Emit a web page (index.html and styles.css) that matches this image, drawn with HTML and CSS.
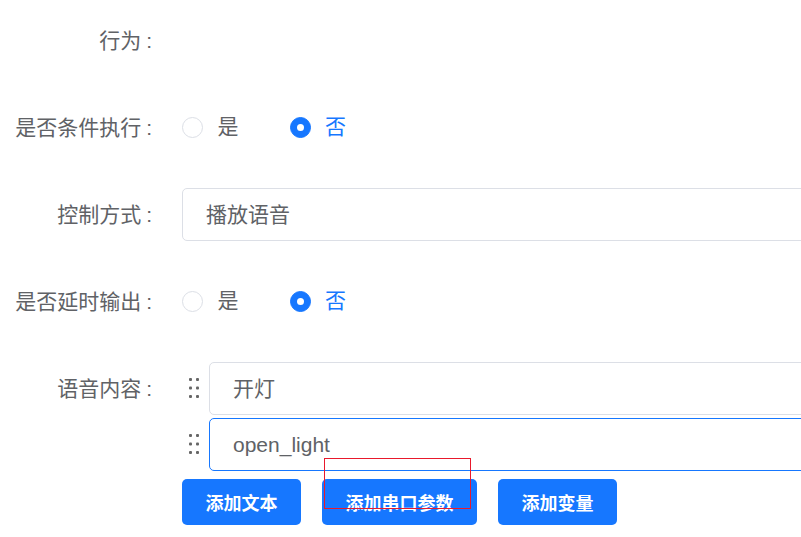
FILE: index.html
```html
<!DOCTYPE html>
<html lang="zh-CN">
<head>
<meta charset="utf-8">
<title>行为配置</title>
<link rel="stylesheet" href="styles.css">
</head>
<body>
<form class="form">
  <div class="item">
    <label class="label">行为</label>
  </div>
  <div class="item">
    <label class="label">是否条件执行</label>
    <div class="control radios">
      <span class="radio"><span class="dot"></span><span class="rtext">是</span></span>
      <span class="radio checked"><span class="dot"></span><span class="rtext">否</span></span>
    </div>
  </div>
  <div class="item">
    <label class="label">控制方式</label>
    <div class="control">
      <div class="input">播放语音</div>
    </div>
  </div>
  <div class="item">
    <label class="label">是否延时输出</label>
    <div class="control radios">
      <span class="radio"><span class="dot"></span><span class="rtext">是</span></span>
      <span class="radio checked"><span class="dot"></span><span class="rtext">否</span></span>
    </div>
  </div>
  <div class="item item-tall">
    <label class="label">语音内容</label>
    <div class="control list">
      <div class="entry">
        <span class="handle"><svg width="12" height="22" viewBox="0 0 12 22"><g fill="#666"><rect x="1" y="1" width="3" height="3" rx="1"/><rect x="8" y="1" width="3" height="3" rx="1"/><rect x="1" y="9.5" width="3" height="3" rx="1"/><rect x="8" y="9.5" width="3" height="3" rx="1"/><rect x="1" y="18" width="3" height="3" rx="1"/><rect x="8" y="18" width="3" height="3" rx="1"/></g></svg></span>
        <div class="input">开灯</div>
      </div>
      <div class="entry">
        <span class="handle"><svg width="12" height="22" viewBox="0 0 12 22"><g fill="#666"><rect x="1" y="1" width="3" height="3" rx="1"/><rect x="8" y="1" width="3" height="3" rx="1"/><rect x="1" y="9.5" width="3" height="3" rx="1"/><rect x="8" y="9.5" width="3" height="3" rx="1"/><rect x="1" y="18" width="3" height="3" rx="1"/><rect x="8" y="18" width="3" height="3" rx="1"/></g></svg></span>
        <div class="input focused">open_light</div>
      </div>
      <div class="buttons">
        <button type="button" class="btn">添加文本</button>
        <button type="button" class="btn">添加串口参数</button>
        <button type="button" class="btn">添加变量</button>
      </div>
    </div>
  </div>
</form>
<div class="marker"></div>
</body>
</html>
```
FILE: styles.css
```css
html, body {
  margin: 0;
  padding: 0;
  background: #fff;
  overflow: hidden;
}
body {
  width: 801px;
  height: 537px;
  position: relative;
  font-family: "Liberation Sans", "Noto Sans CJK SC", sans-serif;
  font-size: 21px;
  color: #606266;
}
.form {
  padding-top: 13.5px;
}
.item {
  display: flex;
  align-items: flex-start;
  margin-bottom: 34px;
  min-height: 53px;
}
.label {
  width: 152px;
  flex: none;
  text-align: right;
  line-height: 53px;
  white-space: nowrap;
}
.label::after {
  content: ":";
  margin-left: 5px;
}
.control {
  margin-left: 30px;
  flex: none;
}
.radios {
  display: flex;
  align-items: center;
  height: 53px;
}
.radio {
  display: inline-flex;
  align-items: center;
  margin-right: 51px;
}
.dot {
  width: 21px;
  height: 21px;
  box-sizing: border-box;
  border: 1px solid #dcdfe6;
  border-radius: 50%;
  margin-right: 14.5px;
  position: relative;
  background: #fff;
}
.checked .dot {
  background: #1677ff;
  border-color: #1677ff;
}
.checked .dot::after {
  content: "";
  position: absolute;
  left: 6px;
  top: 6px;
  width: 7px;
  height: 7px;
  border-radius: 50%;
  background: #fff;
}
.rtext {
  line-height: 24px;
}
.checked .rtext {
  color: #1677ff;
}
.input {
  width: 640px;
  height: 53px;
  box-sizing: border-box;
  border: 1px solid #dcdfe6;
  border-radius: 5px;
  padding-left: 23px;
  line-height: 51px;
  color: #606266;
  background: #fff;
}
.input.focused {
  border-color: #1677ff;
}
.list {
  display: flex;
  flex-direction: column;
  gap: 3px;
}
.entry {
  display: flex;
  align-items: center;
}
.handle {
  width: 24px;
  margin-right: 3px;
  display: flex;
  justify-content: center;
  flex: none;
}
.handle svg {
  display: block;
}
.entry .input {
  width: 613px;
}
.buttons {
  display: flex;
  gap: 21px;
  margin-top: 5px;
}
.btn {
  height: 46.5px;
  padding: 0 23.5px;
  border: none;
  border-radius: 5px;
  background: #1677ff;
  color: #fff;
  font-family: "Noto Sans CJK SC", sans-serif;
  font-size: 18px;
  font-weight: bold;
  cursor: pointer;
}
.marker {
  position: absolute;
  left: 324px;
  top: 458px;
  width: 147px;
  height: 50.5px;
  box-sizing: border-box;
  border: 1px solid #e8192c;
  pointer-events: none;
}
```
